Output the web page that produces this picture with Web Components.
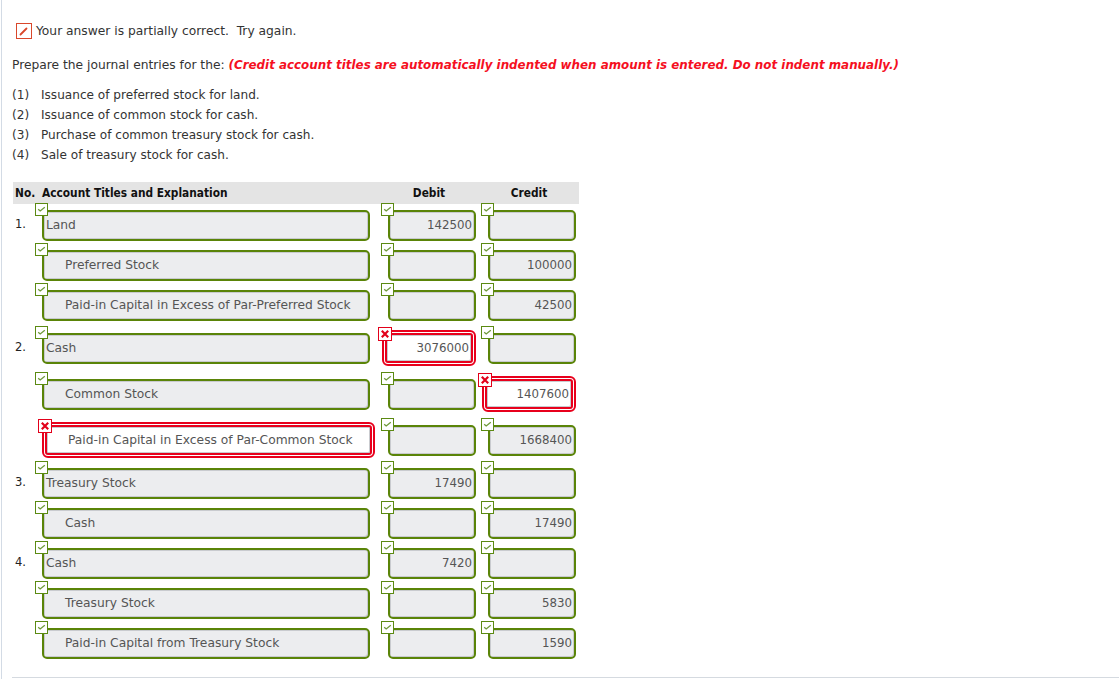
<!DOCTYPE html>
<html><head><meta charset="utf-8"><style>
html,body{margin:0;padding:0;background:#fff}
body{font:12.28px "DejaVu Sans",sans-serif;color:#333}
</style></head><body>
<quiz-page>
<status-line>Your answer is partially correct.&nbsp; Try again.</status-line>
<quiz-prompt>Prepare the journal entries for the: <b slot="note">(Credit account titles are automatically indented when amount is entered. Do not indent manually.)</b></quiz-prompt>
<task-list>
<task-item n="(1)">Issuance of preferred stock for land.</task-item>
<task-item n="(2)">Issuance of common stock for cash.</task-item>
<task-item n="(3)">Purchase of common treasury stock for cash.</task-item>
<task-item n="(4)">Sale of treasury stock for cash.</task-item>
</task-list>
<journal-head></journal-head>
<journal-row h="40" no="1." name="Land" debit="142500"></journal-row>
<journal-row h="40" indent name="Preferred Stock" credit="100000"></journal-row>
<journal-row h="43" indent name="Paid-in Capital in Excess of Par-Preferred Stock" credit="42500"></journal-row>
<journal-row h="46" no="2." name="Cash" debit="3076000" bad="debit"></journal-row>
<journal-row h="46" indent name="Common Stock" credit="1407600" bad="credit"></journal-row>
<journal-row h="43" indent name="Paid-in Capital in Excess of Par-Common Stock" credit="1668400" bad="name"></journal-row>
<journal-row h="40" no="3." name="Treasury Stock" debit="17490"></journal-row>
<journal-row h="40" indent name="Cash" credit="17490"></journal-row>
<journal-row h="40" no="4." name="Cash" debit="7420"></journal-row>
<journal-row h="40" indent name="Treasury Stock" credit="5830"></journal-row>
<journal-row h="40" indent name="Paid-in Capital from Treasury Stock" credit="1590"></journal-row>
</quiz-page>
<script>
function def(name, html, init){
  customElements.define(name, class extends HTMLElement{
    constructor(){super();this.attachShadow({mode:'open'}).innerHTML=html;}
    connectedCallback(){if(init)init(this,this.shadowRoot);}
  });
}
def('quiz-page',`<style>
:host{display:block;height:679px;box-sizing:border-box;margin-left:1px;border-left:1px solid #d3dbe5;padding:0 0 0 10px;position:relative;overflow:hidden}
.rule{position:absolute;left:10px;right:0;top:677px;height:1px;background:#d5dae0}
</style><slot></slot><div class="rule"></div>`);
def('status-line',`<style>
:host{display:flex;align-items:center;gap:3px;height:16px;padding:23px 0 0 4px;line-height:16px}
svg{display:block;flex:none}
</style><svg width="17" height="17" viewBox="0 0 17 17"><rect x="0.5" y="0.5" width="15" height="15" fill="#fff" stroke="#d9472b"/><path d="M4.5 11.5L10.5 5.5" stroke="#d9472b" stroke-width="1.8" stroke-linecap="round"/></svg><span><slot></slot></span>`);
def('quiz-prompt',`<style>
:host{display:block;margin-top:18px;line-height:16px;height:16px}
::slotted(b){color:#f5101f;font-style:italic;font-weight:700;font-size:11.9px}
</style><slot></slot><slot name="note"></slot>`);
def('task-list',`<style>:host{display:block;margin-top:12px;font-size:12.1px}</style><slot></slot>`);
def('task-item',`<style>
:host{display:flex;height:20px;line-height:20px}
.n{width:29px}
</style><span class="n"></span><span><slot></slot></span>`,(el,r)=>{r.querySelector('.n').textContent=el.getAttribute('n');});
def('journal-head',`<style>
:host{display:grid;grid-template-columns:29px 328px 18px 88px 12px 88px 3px;width:566px;height:22px;margin:17px 0 6px 1px;background:#e4e4e4;font:700 11.8px/22px "DejaVu Sans Condensed","DejaVu Sans",sans-serif;color:#111}
.l{padding-left:2px}.c{text-align:center;padding-right:6px}
</style><span class="l">No.</span><span class="t">Account Titles and Explanation</span><i></i><span class="c">Debit</span><i></i><span class="c">Credit</span>`);
def('mark-icon',`<style>
:host{position:absolute;display:block;width:14px;height:14px;z-index:2}
svg{display:block}
</style><svg width="14" height="14" viewBox="0 0 14 14"></svg>`,(el,r)=>{
  const bad=el.hasAttribute('bad');
  r.querySelector('svg').innerHTML= bad
   ? '<rect x=".5" y=".5" width="13" height="13" fill="#fff" stroke="#e2001a"/><path d="M3.8 3.8L10.2 10.2M10.2 3.8L3.8 10.2" stroke="#e2001a" stroke-width="2.2"/>'
   : '<rect x=".5" y=".5" width="12" height="12" fill="#fff" stroke="#5b8a12"/><path d="M3.2 6.2L5.2 8L9.8 4.2" fill="none" stroke="#6f9a3a" stroke-width="1.3"/>';
});
def('entry-field',`<style>
:host{display:block;position:relative;height:31px;box-sizing:border-box;color:#555}
.w{height:100%;box-sizing:border-box}
.o{box-sizing:border-box;height:100%;border:2px solid #5a8408;border-radius:5px;background:#ecedef;box-shadow:inset 1px 1px 0 #c9cbcf,inset -1px -1px 0 #c9cbcf;line-height:26px;padding:0 2px;white-space:nowrap;overflow:hidden}
.num{text-align:right;font-size:11.8px}
.ind{padding-left:21px}
mark-icon{left:-7px;top:-7px}
:host([bad]){height:36px;margin:-3px 0 -2px -6px}
:host([bad][kind=name]){margin:-3px -5px -2px 0}
:host([bad]) mark-icon{left:-4px;top:-3px}
:host([bad]) .w{border:2px solid #e8001c;border-radius:6px;padding:1px;background:#fff}
:host([bad]) .o{border:2px solid #e8001c;border-radius:3px;background:#fff;line-height:26px}
:host([bad]) .num{padding-right:2px}
</style><mark-icon></mark-icon><div class="w"><div class="o"></div></div>`,(el,r)=>{
  const o=r.querySelector('.o'), t=el.getAttribute('text')||'';
  o.textContent=t;
  if(el.getAttribute('kind')!=='name')o.classList.add('num');
  if(el.hasAttribute('indent'))o.classList.add('ind');
  if(el.hasAttribute('bad'))r.querySelector('mark-icon').setAttribute('bad','');
});
def('journal-row',`<style>
:host{display:grid;grid-template-columns:29px 328px 18px 88px 12px 88px;margin-left:1px;box-sizing:border-box}
.no{padding:6px 0 0 2px;line-height:16px;color:#222;font-size:11.5px}
.d{grid-column:4}.c{grid-column:6}
</style><div class="no"></div><div class="cell n"></div><div class="cell d"></div><div class="cell c"></div>`,(el,r)=>{
  el.style.height=el.getAttribute('h')+'px';
  r.querySelector('.no').textContent=el.getAttribute('no')||'';
  const bad=el.getAttribute('bad');
  const mk=(sel,kind,text,ind)=>{
    const f=document.createElement('entry-field');
    f.setAttribute('kind',kind);f.setAttribute('text',text||'');
    if(ind)f.setAttribute('indent','');
    if(bad===kind)f.setAttribute('bad','');
    r.querySelector(sel).appendChild(f);
  };
  mk('.n','name',el.getAttribute('name'),el.hasAttribute('indent'));
  mk('.d','debit',el.getAttribute('debit'));
  mk('.c','credit',el.getAttribute('credit'));
});
</script>
</body></html>
